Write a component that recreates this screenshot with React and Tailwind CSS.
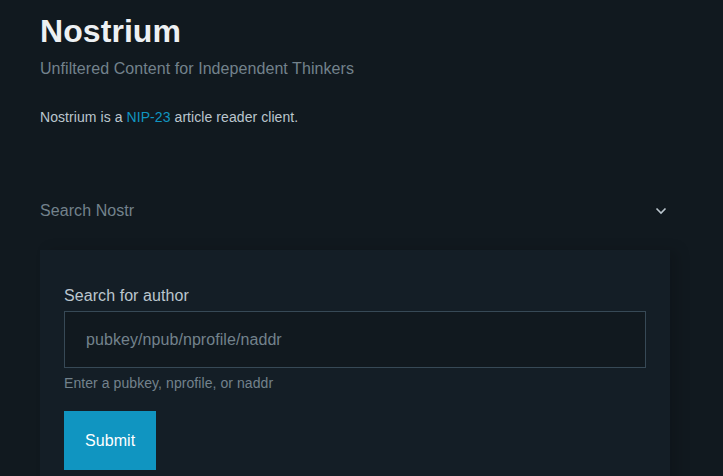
import React from "react";

const App = () => {
  return (
    <div
      className="min-h-screen bg-[#11191f] text-[#bbc6ce] tracking-[0.07px]"
      style={{ fontFamily: '"Liberation Sans", Arial, sans-serif' }}
    >
      <main className="ml-10 w-[630px] pt-[11px]">
        {/* Header */}
        <h1 className="text-[32px] font-bold leading-[40px] text-[#edf0f3]">
          Nostrium
        </h1>
        <p className="mt-[6px] text-base leading-6 text-[#73828c]">
          Unfiltered Content for Independent Thinkers
        </p>
        <p className="mt-[26px] text-sm leading-[21px]">
          Nostrium is a{" "}
          <a href="#" className="text-[#1095c1]">
            NIP-23
          </a>{" "}
          article reader client.
        </p>

        {/* Accordion */}
        <div className="mt-[71px] flex items-center justify-between text-base leading-6 text-[#73828c]">
          <span>Search Nostr</span>
          <svg
            width="12"
            height="8"
            viewBox="0 0 12 8"
            className="mr-[3px] text-[#bbc6ce]"
            fill="none"
            stroke="currentColor"
            strokeWidth="1.6"
          >
            <path d="M1.5 1.5 6 6l4.5-4.5" />
          </svg>
        </div>

        {/* Card */}
        <div className="mt-[27px] bg-[#141e26] px-6 pt-[34px] pb-10 shadow-[8px_0_12px_rgba(0,0,0,0.15)]">
          <label className="block text-base leading-6">Search for author</label>
          <input
            type="text"
            placeholder="pubkey/npub/nprofile/naddr"
            className="mt-[3px] block h-[57px] w-[582px] border border-[#374956] bg-[#11191f] px-[21px] text-base text-[#bbc6ce] placeholder:text-[#73828c] outline-none"
          />
          <p className="mt-[5px] text-sm leading-[21px] text-[#73828c]">
            Enter a pubkey, nprofile, or naddr
          </p>
          <button className="mt-[17px] h-[59px] bg-[#1095c1] px-[21px] text-base text-white">
            Submit
          </button>
        </div>
      </main>
    </div>
  );
};

export default App;
